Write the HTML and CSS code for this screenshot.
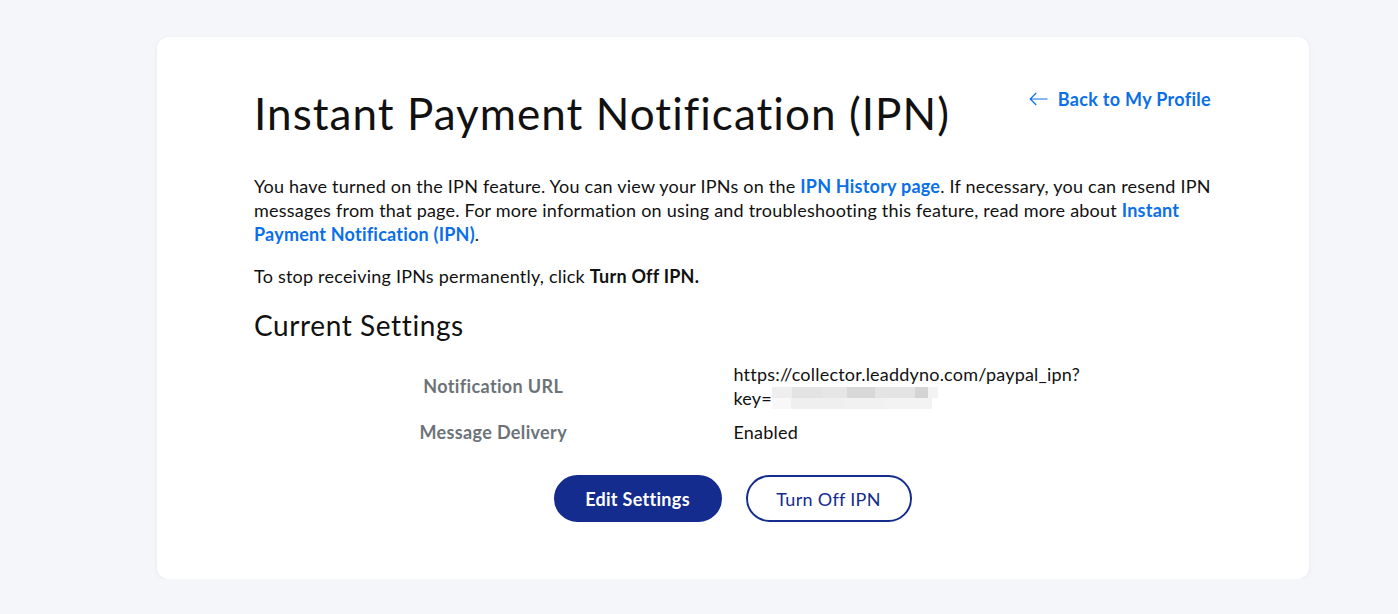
FILE: index.html
```html
<!DOCTYPE html>
<html lang="en">
<head>
<meta charset="utf-8">
<title>Instant Payment Notification (IPN)</title>
<link rel="stylesheet" href="styles.css">
</head>
<body>
<div class="page">
  <main class="card">
    <header class="head">
      <h1 class="title">Instant Payment Notification (IPN)</h1>
      <a class="back" href="#">
        <svg class="arrow" width="19" height="14" viewBox="0 0 19 14" aria-hidden="true"><path d="M18.5 7H1.2M7.2 1L1.2 7l6 6" fill="none" stroke="#0a6fe8" stroke-width="1.2"/></svg>
        <span>Back to My Profile</span>
      </a>
    </header>
    <p class="text">You have turned on the IPN feature. You can view your IPNs on the <a href="#" class="link">IPN History page</a>. If necessary, you can resend IPN messages from that page. For more information on using and troubleshooting this feature, read more about <a href="#" class="link">Instant Payment Notification (IPN)</a>.</p>
    <p class="text">To stop receiving IPNs permanently, click <strong>Turn Off IPN.</strong></p>
    <h2 class="sub">Current Settings</h2>
    <div class="settings">
      <div class="row">
        <div class="label">Notification URL</div>
        <div class="value">https://collector.leaddyno.com/paypal_ipn?<br>key=<span class="blur"><span class="b1"></span><span class="b2"></span></span></div>
      </div>
      <div class="row">
        <div class="label">Message Delivery</div>
        <div class="value">Enabled</div>
      </div>
    </div>
    <div class="actions">
      <button class="btn primary">Edit Settings</button>
      <button class="btn secondary">Turn Off IPN</button>
    </div>
  </main>
</div>
</body>
</html>
```
FILE: styles.css
```css
* { box-sizing: border-box; }
html, body { margin: 0; padding: 0; }
body {
  background: #f5f6fa;
  font-family: Lato, "Noto Sans", sans-serif;
  color: #111;
}
.page {
  padding: 37px 0 0 157px;
}
.card {
  width: 1152px;
  height: 542px;
  background: #fff;
  border-radius: 12px;
  box-shadow: 0 1px 6px rgba(0,0,0,0.05);
  padding: 48px 98px 0 97px;
}
.head {
  display: flex;
  justify-content: space-between;
  align-items: flex-start;
}
.title {
  margin: 0;
  font-size: 44px;
  font-weight: 400;
  line-height: 56px;
  color: #111;
  letter-spacing: 1.05px;
}
.back {
  display: flex;
  align-items: center;
  gap: 10px;
  margin-top: 2px;
  color: #0a6fe8;
  text-decoration: none;
  font-weight: 700;
  font-size: 18px;
  line-height: 24px;
  letter-spacing: 0.3px;
}
.arrow { display: block; }
.text {
  margin: 33px 0 0;
  font-size: 18px;
  line-height: 24px;
  letter-spacing: 0.22px;
}
.text + .text { margin-top: 18px; }
.text strong { font-weight: 700; }
.link { color: #0a6fe8; font-weight: 700; text-decoration: none; }
.sub {
  margin: 19px 0 0;
  font-size: 28px;
  font-weight: 400;
  line-height: 36px;
  letter-spacing: 0.6px;
}
.settings {
  margin-top: 19px;
}
.row {
  display: grid;
  grid-template-columns: 1fr 1fr;
  align-items: center;
  margin-bottom: 10px;
}
.label {
  text-align: center;
  color: #6c7378;
  font-weight: 700;
  font-size: 18px;
  line-height: 24px;
  letter-spacing: 0.35px;
}
.value {
  padding-left: 1px;
  font-size: 18px;
  line-height: 24px;
  letter-spacing: 0.2px;
}
.blur {
  display: inline-block;
  vertical-align: -4px;
  width: 166px;
  height: 22px;
  position: relative;
}
.b1, .b2 { position: absolute; left: 0; display: block; height: 11px; }
.b1 {
  top: 0; width: 166px;
  background: linear-gradient(90deg, #eee 0 12%, #e3e3e3 12% 30%, #e6e6e6 30% 45%, #d8d8d8 45% 62%, #e4e4e4 62% 86%, #d4d4d4 86% 94%, #f3f3f3 94%);
}
.b2 {
  top: 11px; width: 160px;
  background: linear-gradient(90deg, #f8f8f8 0 12%, #efefef 12% 45%, #f1f1f1 45% 70%, #f3f3f3 70%);
}
.actions {
  display: flex;
  justify-content: center;
  gap: 24px;
  margin-top: 31px;
}
.btn {
  height: 47px;
  border-radius: 24px;
  font-family: inherit;
  font-size: 18px;
  letter-spacing: 0.3px;
  cursor: pointer;
}
.primary {
  width: 168px;
  background: #142c8e;
  border: 2px solid #142c8e;
  color: #fff;
  font-weight: 700;
}
.secondary {
  width: 166px;
  background: #fff;
  border: 2px solid #142c8e;
  color: #142c8e;
  font-weight: 400;
}
```
